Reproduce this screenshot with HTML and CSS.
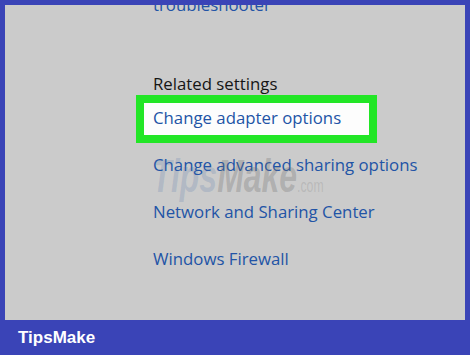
FILE: index.html
```html
<!DOCTYPE html>
<html lang="en">
<head>
  <meta charset="UTF-8" />
  <title>Related settings</title>
  <link rel="stylesheet" href="styles.css">
</head>
<body>

  <div class="screen">
    <div class="line link">troubleshooter</div>

    <div class="line heading">Related settings</div>

    <div class="highlight">
      <div class="line link">Change adapter options</div>
    </div>

    <div class="links">
      <div class="line link">Change advanced sharing options</div>
      <div class="line link">Network and Sharing Center</div>
      <div class="line link">Windows Firewall</div>
    </div>

    <!-- watermark over the screen -->
    <div class="watermark"><span class="tips">Tips</span>Make<span class="dot">.com</span></div>
  </div>

  <div class="footer">TipsMake</div>

</body>
</html>
```

FILE: styles.css
```css
body {
  margin: 0;
  background: #3a44b7;
  font-family: 'Open Sans', sans-serif;
}
.screen {
  position: relative;
  margin: 5px 5px 0;
  height: 315px;
  padding-left: 148px;
  background: #cbcbcb;
  overflow: hidden;
}
.line {
  font-size: 16.8px;
  line-height: 24px;
  white-space: nowrap;
}
.screen > .line:first-child {
  margin-top: -12px;
}
.link {
  color: #2254a6;
}
.heading {
  margin-top: 55px;
  color: #151515;
}
.highlight {
  box-sizing: border-box;
  width: 241px;
  margin: -1px 0 0 -17px;
  padding: 3px 0 5px 9px;
  border: 8px solid #22e626;
  background: #fdfdfd;
}
.links {
  display: flex;
  flex-direction: column;
  gap: 23px;
  margin-top: 10px;
}
.watermark {
  position: absolute;
  left: 147px;
  top: 144px;
  font-family: 'Liberation Sans', sans-serif;
  font-weight: bold;
  font-style: italic;
  font-size: 47px;
  line-height: 54px;
  color: rgba(110, 110, 110, 0.3);
  transform: scaleX(0.68);
  transform-origin: left top;
  pointer-events: none;
}
.watermark .tips {
  color: rgba(70, 110, 170, 0.2);
}
.watermark .dot {
  font-size: 18px;
  font-style: normal;
  font-weight: normal;
  color: rgba(140, 140, 140, 0.3);
}
.footer {
  height: 35px;
  padding-left: 18px;
  font-family: 'Liberation Sans', sans-serif;
  font-weight: bold;
  font-size: 17px;
  line-height: 35px;
  color: #ffffff;
}
```
